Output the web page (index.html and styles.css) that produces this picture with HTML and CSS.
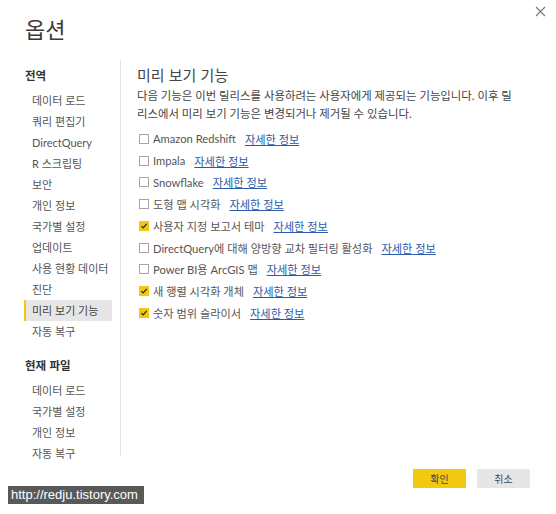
FILE: index.html
```html
<!DOCTYPE html>
<html lang="ko">
<head>
<meta charset="utf-8">
<link rel="stylesheet" href="styles.css">
</head>
<body>
<div class="dialog">
  <button class="close" aria-label="닫기">
    <svg width="11" height="11" viewBox="0 0 11 11"><path d="M1 1L10 10M10 1L1 10" stroke="#7a7a7a" stroke-width="1.2" fill="none"/></svg>
  </button>
  <h1 class="title">옵션</h1>
  <div class="main">
    <nav class="sidebar">
      <div class="group-title">전역</div>
      <ul class="nav-list">
        <li>데이터 로드</li>
        <li>쿼리 편집기</li>
        <li>DirectQuery</li>
        <li>R 스크립팅</li>
        <li>보안</li>
        <li>개인 정보</li>
        <li>국가별 설정</li>
        <li>업데이트</li>
        <li>사용 현황 데이터</li>
        <li>진단</li>
        <li class="active">미리 보기 기능</li>
        <li>자동 복구</li>
      </ul>
      <div class="group-title second">현재 파일</div>
      <ul class="nav-list">
        <li>데이터 로드</li>
        <li>국가별 설정</li>
        <li>개인 정보</li>
        <li>자동 복구</li>
      </ul>
    </nav>
    <section class="content">
      <h2 class="heading">미리 보기 기능</h2>
      <p class="desc">다음 기능은 이번 릴리스를 사용하려는 사용자에게 제공되는 기능입니다. 이후 릴<br>리스에서 미리 보기 기능은 변경되거나 제거될 수 있습니다.</p>
      <ul class="options">
        <li><span class="cb"></span><span class="label">Amazon Redshift</span><a class="more" href="#">자세한 정보</a></li>
        <li><span class="cb"></span><span class="label">Impala</span><a class="more" href="#">자세한 정보</a></li>
        <li><span class="cb"></span><span class="label">Snowflake</span><a class="more" href="#">자세한 정보</a></li>
        <li><span class="cb"></span><span class="label">도형 맵 시각화</span><a class="more" href="#">자세한 정보</a></li>
        <li><span class="cb checked"><svg width="10" height="10" viewBox="0 0 10 10"><path d="M1.8 5.2L4 7.4L8.4 2.4" stroke="#222" stroke-width="1.5" fill="none"/></svg></span><span class="label">사용자 지정 보고서 테마</span><a class="more" href="#">자세한 정보</a></li>
        <li><span class="cb"></span><span class="label">DirectQuery에 대해 양방향 교차 필터링 활성화</span><a class="more" href="#">자세한 정보</a></li>
        <li><span class="cb"></span><span class="label">Power BI용 ArcGIS 맵</span><a class="more" href="#">자세한 정보</a></li>
        <li><span class="cb checked"><svg width="10" height="10" viewBox="0 0 10 10"><path d="M1.8 5.2L4 7.4L8.4 2.4" stroke="#222" stroke-width="1.5" fill="none"/></svg></span><span class="label">새 행렬 시각화 개체</span><a class="more" href="#">자세한 정보</a></li>
        <li><span class="cb checked"><svg width="10" height="10" viewBox="0 0 10 10"><path d="M1.8 5.2L4 7.4L8.4 2.4" stroke="#222" stroke-width="1.5" fill="none"/></svg></span><span class="label">숫자 범위 슬라이서</span><a class="more" href="#">자세한 정보</a></li>
      </ul>
    </section>
  </div>
  <div class="footer">
    <button class="btn primary">확인</button>
    <button class="btn">취소</button>
  </div>
</div>
<div class="watermark">http://redju.tistory.com</div>
</body>
</html>
```

FILE: styles.css
```css
* { box-sizing: border-box; }
html, body { margin: 0; padding: 0; background: #fff; }
body {
  width: 556px;
  height: 514px;
  position: relative;
  overflow: hidden;
  font-family: "Lato", "Noto Sans CJK KR", sans-serif;
  color: #555;
}
.dialog { padding-top: 12px; }
.close {
  position: absolute;
  top: 6px;
  left: 535px;
  width: 11px;
  height: 11px;
  padding: 0;
  border: 0;
  background: none;
  display: block;
}
.close svg { display: block; }
.title {
  margin: 0 0 0 25px;
  font-family: "Noto Sans CJK KR", sans-serif;
  font-weight: 400;
  font-size: 22px;
  line-height: 32px;
  color: #3a3a3a;
}
.main {
  display: flex;
  margin-top: 16px;
  padding-left: 24px;
}
.sidebar {
  width: 97px;
  height: 396px;
  border-right: 1px solid #e3e3e3;
  padding-top: 5px;
}
.group-title {
  font-family: "Noto Sans CJK KR", sans-serif;
  font-weight: 700;
  font-size: 11.5px;
  line-height: 21px;
  color: #333;
  padding-left: 1px;
  margin-bottom: 4px;
}
.group-title.second { margin-top: 13px; }
.nav-list { list-style: none; margin: 0; padding: 0; }
.nav-list li {
  width: 88px;
  height: 21px;
  line-height: 21px;
  font-size: 11px;
  padding-left: 6px;
  border-left: 2px solid transparent;
  color: #555;
  white-space: nowrap;
}
.nav-list li.active {
  background: #e6e6e6;
  border-left-color: #f2c811;
  color: #444;
}
.content {
  flex: 1;
  padding-left: 16px;
  padding-top: 4px;
}
.heading {
  margin: 0;
  font-family: "Noto Sans CJK KR", sans-serif;
  font-weight: 400;
  font-size: 15px;
  line-height: 21px;
  color: #444;
}
.desc {
  margin: 2px 0 0;
  font-size: 11.4px;
  line-height: 18px;
  color: #444;
  white-space: nowrap;
}
.options { list-style: none; margin: 5px 0 0; padding: 0; }
.options li {
  display: flex;
  align-items: center;
  height: 21.75px;
  font-size: 11.2px;
  color: #555;
  white-space: nowrap;
}
.cb {
  width: 10px;
  height: 10px;
  border: 1px solid #a6a6a6;
  background: #fff;
  margin: 0 4px 0 2px;
  flex: none;
  display: flex;
  align-items: center;
  justify-content: center;
}
.cb.checked { background: #f2c811; border-color: #f2c811; }
.cb svg { display: block; }
.more {
  margin-left: 9px;
  color: #2a5aa8;
  text-decoration: underline;
}
.footer {
  display: flex;
  justify-content: flex-end;
  gap: 11px;
  padding-right: 26px;
  margin-top: 13px;
}
.btn {
  width: 53px;
  height: 19px;
  border: 0;
  padding: 0;
  font-family: "Noto Sans CJK KR", sans-serif;
  font-size: 10px;
  color: #444;
  background: #e6e6e6;
}
.btn.primary { background: #f2c811; }
.watermark {
  position: absolute;
  left: 8px;
  top: 486px;
  width: 136px;
  height: 18px;
  background: #595959;
  color: #fff;
  font-family: "Liberation Sans", sans-serif;
  font-size: 13px;
  line-height: 18px;
  padding-left: 3px;
}
```
